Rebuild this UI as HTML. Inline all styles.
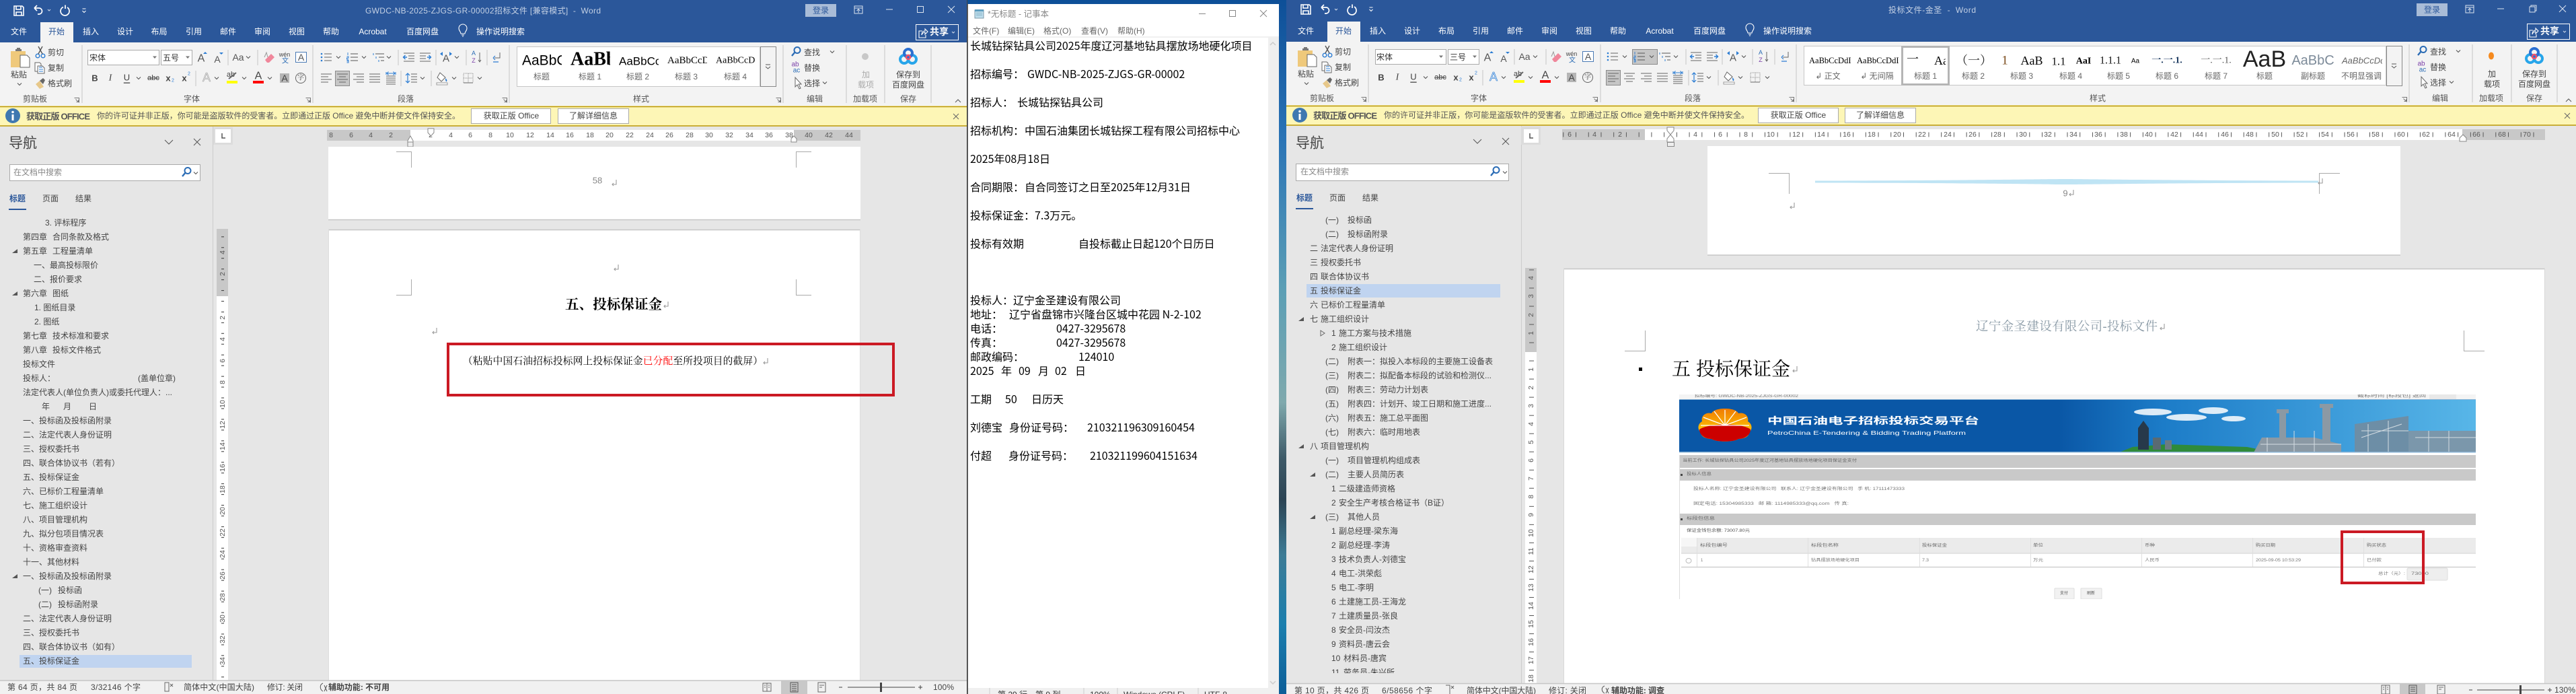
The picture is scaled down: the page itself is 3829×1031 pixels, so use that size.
<!DOCTYPE html>
<html lang="zh-CN">
<head>
<meta charset="utf-8">
<title>Word 与记事本</title>
<style>
html,body{margin:0;padding:0;background:#e6e6e6;width:3829px;height:1031px;overflow:hidden}
svg{display:block}
text{font-family:"Liberation Sans","Noto Sans CJK SC",sans-serif;font-size:12px;dominant-baseline:central;fill:#444;white-space:pre}
.w{fill:#fff}.c{text-anchor:middle}.tb{fill:#c3d0e4}
.g{fill:#666}.lb{fill:#555}
.s{font-family:"Liberation Serif","Noto Serif CJK SC",serif}
.np{font-family:"Noto Sans CJK SC","Liberation Sans",sans-serif;font-size:16px;fill:#000}
.r{font-size:10.5px;fill:#555;text-anchor:middle}
.sm{font-size:6px;fill:#777}
.nv{fill:#444}
use{overflow:visible}
</style>
</head>
<body>
<svg xmlns="http://www.w3.org/2000/svg" width="3829" height="1031" viewBox="0 0 3829 1031">
<defs>
<linearGradient id="wall" x1="0" y1="0" x2="0" y2="1">
<stop offset="0" stop-color="#0d4f98"/><stop offset=".2" stop-color="#2a74b6"/><stop offset=".42" stop-color="#5c9fb5"/><stop offset=".58" stop-color="#7fa9ad"/><stop offset=".66" stop-color="#3e5a68"/><stop offset=".72" stop-color="#2c4454"/><stop offset=".8" stop-color="#3d7c96"/><stop offset=".9" stop-color="#1b7fae"/><stop offset="1" stop-color="#0d5e98"/>
</linearGradient>
<linearGradient id="sky" x1="0" y1="0" x2="1" y2="0">
<stop offset="0" stop-color="#0a57a6"/><stop offset=".25" stop-color="#1c7cc8"/><stop offset="1" stop-color="#58b6e8"/>
</linearGradient>
<linearGradient id="pet" x1="0" y1="0" x2="0" y2="1">
<stop offset="0" stop-color="#ef7a00"/><stop offset=".75" stop-color="#ffcb05"/>
</linearGradient>
<pattern id="tk2" patternUnits="userSpaceOnUse" x="2454.4" y="192" width="18.73" height="16"><path d="M.5 4.5V11.5" stroke="#555" fill="none"/></pattern>
<pattern id="tv1" patternUnits="userSpaceOnUse" x="328" y="431" width="10" height="15.95"><path d="M1 .5H5" stroke="#444" stroke-width="1.2"/></pattern>
<pattern id="tv2" patternUnits="userSpaceOnUse" x="2273" y="454.5" width="10" height="27.03"><path d="M0 .5H7" stroke="#555"/></pattern>
<g id="save" fill="none" stroke="#fff" stroke-width="1.6"><path d="M-7-7H5L7-5V7H-7Z"/><path d="M-4-7V-2H3V-7M-4 7V2H4V7"/></g>
<g id="undo" fill="none" stroke="#fff" stroke-width="1.7"><path d="M-6-3L-2-7M-6-3L-2 1M-6-3H1A4.5 4.5 0 0 1 1 6H-1"/></g>
<g id="redo" fill="none" stroke="#fff" stroke-width="1.7"><path d="M-2-5.5A6.5 6.5 0 1 0 4-5M1-8.5V-3"/></g>
<g id="drop" fill="none" stroke="#fff" stroke-width="1.1"><path d="M-2.5-3H2.5M-2.5 0L0 2.5L2.5 0"/></g>
<path id="chw" d="M-2-1L0 1L2-1" stroke="#d5deec" fill="none"/>
<path id="ch" d="M-3-1.5L0 1.5L3-1.5" stroke="#555" fill="none" stroke-width="1.1"/>
<path id="tri" d="M5-3V3H-3Z" fill="#555"/>
<path id="ctri" d="M-3-4L3 0L-3 4Z" fill="none" stroke="#666"/>
<path id="ret" d="M3-5V2H-3M-1 0L-3 2L-1 4" fill="none" stroke="#9a9a9a" stroke-width="1.1"/>
<path id="lau" d="M-3.5-3.5H3.5V3.5M-1.5-1.5L2.5 2.5M2.5-.5V2.5H-.5" fill="none" stroke="#777"/>
<g id="bulb" fill="none" stroke="#fff" stroke-width="1.1"><path d="M-3 4C-3 1-6 0-6-4A6 6 0 0 1 6-4C6 0 3 1 3 4ZM-2 6H2M-1 8H1"/></g>
<g id="share" fill="none" stroke="#fff" stroke-width="1.1"><path d="M-1-3H-6V7H4V3M-2 3C-2-1 0-3 3-3V-6L7-2L3 2V-1C1-1-1 0-2 3Z"/></g>
<g id="paste"><rect x="0" y="5" width="22" height="24" fill="#efc97b"/><path d="M7 5V2H9V0H14V2H16V5Z" fill="#777"/><path d="M14 11H24L28 15V29H14Z" fill="#fff" stroke="#666"/></g>
<g id="cut" fill="none" stroke-width="1.4"><circle cx="-4" cy="6" r="2.8" stroke="#2b7cd3"/><circle cx="4" cy="6" r="2.8" stroke="#2b7cd3"/><path d="M-3 3L3-8M3 3L-3-8" stroke="#555"/></g>
<g id="copy" fill="#fff" stroke="#666"><path d="M-7-8H0L2-6V5H-7Z"/><path d="M-3-3H4L7 0V8H-3Z"/><path d="M-1-1H4M-1 2H5M-1 5H5" stroke="#2b7cd3"/></g>
<g id="brush"><path d="M-7 1L-1-4L5 5L-1 8Z" fill="#e7c88a"/><path d="M-1-4L4-8L7-5L4 1Z" fill="#666"/></g>
<g id="eraser"><path d="M-6 3L3-6L8-1L0 7H-3Z" fill="#f0879b"/><path d="M-7-1L-4-8L-2-1" fill="none" stroke="#999"/></g>
<g id="bul"><g fill="#2b7cd3"><circle cx="-7" cy="-5" r="1.3"/><circle cx="-7" cy="0" r="1.3"/><circle cx="-7" cy="5" r="1.3"/></g><path d="M-3-5H8M-3 0H8M-3 5H8" stroke="#666"/></g>
<g id="num"><path d="M-7-7V-3M-8.5 -1H-6V1H-8.5V3H-6M-8.5 4.5H-6V8H-8.5M-8.5 6H-6" stroke="#2b7cd3" fill="none" stroke-width=".9"/><path d="M-3-5H8M-3 0H8M-3 5H8" stroke="#555"/></g>
<g id="mul"><path d="M-8-6V-3M-4-1V2M0 4V7" stroke="#2b7cd3" fill="none"/><path d="M-5-5H8M0 0H8M3 5H8" stroke="#555" stroke-dasharray="6 0"/></g>
<g id="out"><path d="M-8-6H8M-1-2H8M-1 2H8M-8 6H8" stroke="#666"/><path d="M-3 0H-8M-5.5-3L-8.5 0L-5.5 3" stroke="#2b7cd3" fill="none" stroke-width="1.4"/></g>
<g id="ind"><path d="M-8-6H8M-8-2H1M-8 2H1M-8 6H8" stroke="#666"/><path d="M3 0H8M5.5-3L8.5 0L5.5 3" stroke="#2b7cd3" fill="none" stroke-width="1.4"/></g>
<g id="pm"><path d="M5-7V1H-3" fill="none" stroke="#666"/><path d="M-5 1L-2-2M-5 1L-2 4M-5 7H3" fill="none" stroke="#2b7cd3" stroke-width="1.2"/></g>
<path id="al" d="M-8-6H8M-8-2H3M-8 2H8M-8 6H3" stroke="#666"/>
<path id="ac" d="M-8-6H8M-5-2H5M-8 2H8M-5 6H5" stroke="#666"/>
<path id="ar" d="M-8-6H8M-3-2H8M-8 2H8M-3 6H8" stroke="#666"/>
<path id="aj" d="M-8-6H8M-8-2H8M-8 2H8M-8 6H8" stroke="#666"/>
<g id="ad"><path d="M-7-3H7M-7 0H7M-7 3H7M-7 6H7M-7 9H7" stroke="#666"/><path d="M-7-9V-5M7-9V-5M-6-7H6M-3.5-9.5L-6-7L-3.5-4.5M3.5-9.5L6-7L3.5-4.5" stroke="#2b7cd3" fill="none"/></g>
<g id="ls"><path d="M-6-7V7M-9-4L-6-7L-3-4M-9 4L-6 7L-3 4" stroke="#2b7cd3" fill="none" stroke-width="1.2"/><path d="M-1-6H8M-1-2H8M-1 2H8M-1 6H8" stroke="#666"/></g>
<g id="sh"><path d="M-3-8L5-1L-1 5L-7-1Z" fill="#fff" stroke="#666"/><path d="M5 0C7 2 8 3 7 5C6 6 5 4 5 0Z" fill="#2b7cd3"/><rect x="-8" y="7" width="16" height="3" fill="#fff" stroke="#999"/></g>
<g id="bd"><rect x="-7" y="-7" width="14" height="14" fill="none" stroke="#888" stroke-dasharray="1 1"/><path d="M0-7V7M-7 0H7" stroke="#888" stroke-dasharray="1 1"/><path d="M-7 7H7" stroke="#666"/></g>
<g id="find" fill="none"><circle cx="2" cy="-2.5" r="4.5" stroke="#2b6cb5" stroke-width="2"/><path d="M-1-0L-6 6" stroke="#2b6cb5" stroke-width="2.4"/></g>
<path id="sel" d="M-3-8V6L0 3L3 9L5 8L2 2H6Z" fill="#fff" stroke="#666"/>
<g id="baidu" fill="none" stroke-width="4"><circle cx="-6" cy="3" r="6" stroke="#27a5ea"/><circle cx="6" cy="3" r="6" stroke="#27a5ea"/><circle cx="0" cy="-6" r="6" stroke="#2a6fd1"/><circle cx="0" cy="0" r="3" stroke="#f2516a" stroke-width="2.4"/></g>
<g id="np"><path d="M1 3H14V15H1Z" fill="#bfe0ee" stroke="#7d98a8"/><path d="M1 2H14V5H1Z" fill="#5f9fc0"/><path d="M3 7H12M3 9H12M3 11H12" stroke="#8fb6c9"/></g>
<clipPath id="g0"><rect x="770" y="70" width="65" height="40"/></clipPath>
<clipPath id="g1"><rect x="842" y="70" width="65" height="40"/></clipPath>
<clipPath id="g2"><rect x="914" y="70" width="65" height="40"/></clipPath>
<clipPath id="g3"><rect x="986" y="70" width="65" height="40"/></clipPath>
<clipPath id="g4"><rect x="1058" y="70" width="64" height="40"/></clipPath>
<clipPath id="g5"><rect x="2830" y="70" width="62" height="40"/></clipPath>
<clipPath id="g6"><rect x="3475" y="70" width="66" height="40"/></clipPath>
<clipPath id="navl"><rect x="1912" y="316" width="348" height="684"/></clipPath>
<clipPath id="imgc"><rect x="2496" y="586" width="1184" height="304"/></clipPath>
<clipPath id="ntp"><rect x="1438" y="1022" width="463" height="9"/></clipPath>
</defs>

<!-- wallpaper -->
<rect x="1430" y="0" width="490" height="1031" fill="url(#wall)"/>

<!-- ================= LEFT WORD ================= -->
<rect x="0" y="0" width="1438" height="1031" fill="#e6e6e6"/>
<rect x="0" y="0" width="1438" height="63" fill="#2b579a"/>
<use href="#save" x="28" y="16"/><use href="#undo" x="57" y="15"/><use href="#chw" x="73" y="15"/><use href="#redo" x="96" y="16"/><use href="#drop" x="125" y="16"/>
<text x="543" y="16" class="tb" textLength="350" lengthAdjust="spacing">GWDC-NB-2025-ZJGS-GR-00002招标文件 [兼容模式]  -  Word</text>
<rect x="1197" y="6" width="46" height="19" fill="#a9bcd7"/><text x="1220" y="15.500" class="c" style="fill:#2b579a">登录</text>
<path d="M1270 9H1282V20H1270ZM1270 12H1282M1276 19V14M1273.500 16L1276 13.500L1278.500 16" fill="none" stroke="#dbe3ef"/>
<path d="M1317 14H1327" stroke="#dbe3ef"/><rect x="1363.500" y="9.500" width="9" height="9" fill="none" stroke="#dbe3ef"/><path d="M1409 9L1419 19M1419 9L1409 19" stroke="#dbe3ef"/>
<rect x="60" y="33" width="49" height="30" fill="#f3f3f3"/>
<g class="tabs">
<text x="28" y="47" class="w c">文件</text><text x="84" y="47" class="c" style="fill:#2b579a">开始</text><text x="135" y="47" class="w c">插入</text><text x="186" y="47" class="w c">设计</text><text x="236.500" y="47" class="w c">布局</text><text x="288" y="47" class="w c">引用</text><text x="339" y="47" class="w c">邮件</text><text x="390" y="47" class="w c">审阅</text><text x="441" y="47" class="w c">视图</text><text x="492" y="47" class="w c">帮助</text><text x="554" y="47" class="w c">Acrobat</text><text x="628" y="47" class="w c">百度网盘</text><use href="#bulb" x="688" y="46"/><text x="708" y="47" class="w">操作说明搜索</text>
</g>
<rect x="1361.500" y="36.500" width="63" height="23" fill="none" stroke="#fff"/><use href="#share" x="1372" y="49"/><text x="1382" y="47" class="w" style="font-weight:bold;font-size:14px">共享</text><use href="#chw" x="1417" y="48"/>
<!-- ribbon -->
<rect x="0" y="63" width="1438" height="95" fill="#f3f3f3"/>
<path d="M122 67V153M465 67V153M757 67V153M1164 67V153M1258 67V153M1315 67V153M1384 67V153" stroke="#c6c6c6"/>
<use href="#paste" x="16" y="71"/><text x="28" y="111" class="c">粘贴</text><use href="#ch" x="29" y="125"/>
<use href="#cut" x="60" y="77"/><text x="71" y="78">剪切</text><use href="#copy" x="59" y="101"/><text x="71" y="101">复制</text><use href="#brush" x="60" y="124"/><text x="71" y="124">格式刷</text>
<text x="52" y="147" class="c lb">剪贴板</text><use href="#lau" x="114" y="149"/>
<rect x="130.500" y="74.500" width="106" height="22" fill="#fff" stroke="#aaa"/><text x="133" y="86" style="fill:#333">宋体</text><path d="M227 83.500H233L230 87Z" fill="#777"/>
<rect x="239.500" y="74.500" width="46" height="22" fill="#fff" stroke="#aaa"/><text x="242" y="86" style="fill:#333">五号</text><path d="M276 83.500H282L279 87Z" fill="#777"/>
<text x="299" y="87" class="c" style="font-size:16px;fill:#555">A</text><path d="M302 80H308L305 77Z" fill="#2b7cd3"/>
<text x="323" y="88" class="c" style="font-size:14px;fill:#555">A</text><path d="M326 78H332L329 81Z" fill="#2b7cd3"/>
<path d="M339 74V97M383 74V97M291 105V128M592 74V97M648 74V97M693 74V97M724 74V97M596 105V128M641 105V128" stroke="#c6c6c6"/>
<text x="354" y="85" class="c" style="font-size:14px;fill:#555">Aa</text><use href="#ch" x="369" y="85"/>
<use href="#eraser" x="400" y="86"/><text x="423" y="81" class="c" style="font-size:9px">wén</text><text x="424" y="91" class="c" style="font-size:10px;fill:#2b6cb5">文</text>
<rect x="439.500" y="77.500" width="16" height="15" fill="#fff" stroke="#4a7ab5"/><text x="447.500" y="85" class="c" style="font-size:14px;fill:#555">A</text>
<text x="141" y="116" class="c" style="font-size:13px;font-weight:bold">B</text><text x="164" y="116" class="c s" style="font-size:14px;font-style:italic">I</text><text x="188.500" y="115" class="c" style="font-size:13px;text-decoration:underline">U</text><use href="#ch" x="206" y="116"/>
<text x="228" y="116" class="c" style="font-size:11px;text-decoration:line-through">abc</text><text x="250" y="116" class="c" style="font-size:13px;font-weight:bold">x</text><text x="257" y="120" class="c" style="font-size:7px;fill:#2b7cd3">2</text><text x="274" y="116" class="c" style="font-size:13px;font-weight:bold">x</text><text x="281" y="110" class="c" style="font-size:7px;fill:#2b7cd3">2</text>
<text x="307" y="115" class="c" style="font-size:18px;fill:#ddd;stroke:#aaa;stroke-width:.6">A</text><use href="#ch" x="322" y="116"/>
<text x="343" y="111" class="c" style="font-size:11px">ab</text><path d="M340 117L351 108" stroke="#666" stroke-width="2"/><rect x="337" y="120" width="16" height="4" fill="#ffff00"/><use href="#ch" x="363" y="116"/>
<text x="384" y="113" class="c" style="font-size:16px">A</text><rect x="376" y="120" width="16" height="4" fill="#f00"/><use href="#ch" x="401" y="116"/>
<rect x="416" y="109" width="14" height="14" fill="#b5b5b5"/><text x="423" y="116" class="c" style="font-size:14px">A</text>
<circle cx="447" cy="116" r="7.500" fill="none" stroke="#666"/><text x="447" y="116" class="c s" style="font-size:10px">字</text>
<text x="285" y="147" class="c lb">字体</text><use href="#lau" x="458" y="149"/>
<use href="#bul" x="485" y="85"/><use href="#ch" x="503" y="85"/><use href="#num" x="524" y="85"/><use href="#ch" x="541" y="85"/><use href="#mul" x="563" y="85"/><use href="#ch" x="578" y="85"/><use href="#out" x="608" y="85"/><use href="#ind" x="632" y="85"/>
<text x="663" y="87" class="c" style="font-size:15px;fill:#555">A</text><path d="M654 80L658 77V83ZM672 80L668 77V83Z" fill="#2b7cd3"/><use href="#ch" x="679" y="85"/>
<text x="704" y="79" class="c" style="font-size:9px;fill:#2b6cb5">A</text><text x="704" y="90" class="c" style="font-size:9px;fill:#7a3fa8">Z</text><path d="M713 78V92M711 89L713 92L715 89" fill="none" stroke="#666"/><use href="#pm" x="738" y="85"/>
<use href="#al" x="485" y="116"/><rect x="498.500" y="105.500" width="21" height="22" fill="#c6c6c6" stroke="#8a8a8a"/><use href="#ac" x="509" y="116"/><use href="#ar" x="533" y="116"/><use href="#aj" x="557" y="116"/><use href="#ad" x="581" y="116"/>
<use href="#ls" x="612" y="116"/><use href="#ch" x="628" y="116"/><use href="#sh" x="657" y="116"/><use href="#ch" x="675" y="116"/><use href="#bd" x="696" y="116"/><use href="#ch" x="713" y="116"/>
<text x="603" y="147" class="c lb">段落</text><use href="#lau" x="750" y="149"/>
<!-- gallery -->
<rect x="768.500" y="69.500" width="361" height="59" fill="#fff" stroke="#c6c6c6"/><rect x="1130.500" y="69.500" width="23" height="59" fill="#f3f3f3" stroke="#888"/><path d="M1138 96H1145M1138 99L1141.500 102L1145 99" fill="none" stroke="#555"/>
<g clip-path="url(#g0)"><text x="776" y="90" style="font-size:21px;fill:#000">AaBbCcDdEe</text></g>
<g clip-path="url(#g1)"><text x="848" y="88" class="s" style="font-size:28px;font-weight:bold;fill:#000">AaBbCc</text></g>
<g clip-path="url(#g2)"><text x="920" y="91" style="font-size:17px;fill:#000">AaBbCcDd</text></g>
<g clip-path="url(#g3)"><text x="992" y="90" class="s" style="font-size:15px;fill:#000">AaBbCcDd</text></g>
<g clip-path="url(#g4)"><text x="1064" y="90" class="s" style="font-size:14px;fill:#000">AaBbCcDdEe</text></g>
<text x="805" y="114" class="c g">标题</text><text x="877" y="114" class="c g">标题 1</text><text x="948" y="114" class="c g">标题 2</text><text x="1020" y="114" class="c g">标题 3</text><text x="1093" y="114" class="c g">标题 4</text>
<text x="953" y="147" class="c lb">样式</text><use href="#lau" x="1157" y="149"/>
<use href="#find" x="1183" y="77"/><text x="1195" y="78">查找</text><use href="#ch" x="1237" y="77"/>
<text x="1182" y="96" class="c" style="font-size:10px;fill:#7a3fa8">ab</text><text x="1184" y="105" class="c" style="font-size:10px;fill:#2b6cb5">ac</text><text x="1195" y="101">替换</text>
<use href="#sel" x="1185" y="123"/><text x="1195" y="124">选择</text><use href="#ch" x="1226" y="123"/>
<text x="1211" y="147" class="c lb">编辑</text>
<circle cx="1286" cy="84" r="5" fill="#c8c8c8"/><text x="1287" y="111" class="c" style="fill:#aaa">加</text><text x="1287" y="126" class="c" style="fill:#aaa">载项</text><text x="1286" y="147" class="c lb">加载项</text>
<use href="#baidu" x="1350" y="85"/><text x="1350" y="111" class="c">保存到</text><text x="1350" y="126" class="c">百度网盘</text><text x="1350" y="147" class="c lb">保存</text>
<path d="M1420 152L1424 148L1428 152" fill="none" stroke="#555"/>
<!-- yellow bar -->
<rect x="0" y="157" width="1438" height="31" fill="#fdf6b6"/><path d="M0 158.500H1438M0 187H1438" stroke="#b8960f" stroke-width="1.400"/>
<circle cx="19" cy="172" r="11" fill="#3f78b0"/><rect x="17.500" y="170" width="3" height="9" fill="#fff"/><circle cx="19" cy="166.500" r="1.800" fill="#fff"/>
<text x="39" y="173" style="font-weight:bold;font-size:13px;fill:#555" textLength="95">获取正版 OFFICE</text>
<text x="144" y="172" style="fill:#555" textLength="540">你的许可证并非正版，你可能是盗版软件的受害者。立即通过正版 Office 避免中断并使文件保持安全。</text>
<rect x="700.500" y="161.500" width="118" height="22" fill="#fff" stroke="#aaa"/><text x="760" y="172" class="c">获取正版 Office</text>
<rect x="829.500" y="161.500" width="105" height="22" fill="#fff" stroke="#aaa"/><text x="882" y="172" class="c">了解详细信息</text>
<path d="M1417 169L1425 177M1425 169L1417 177" stroke="#666"/>
<!-- nav -->
<path d="M316.500 188V1011" stroke="#ccc"/>
<text x="13" y="213" style="font-size:21px">导航</text><path d="M245 208L251 214L257 208M288 206L298 216M298 206L288 216" fill="none" stroke="#555"/>
<rect x="14.500" y="244.500" width="283" height="24" fill="#fff" stroke="#aaa"/><text x="20" y="256" style="fill:#888">在文档中搜索</text><use href="#find" x="277" y="256"/><use href="#ch" x="291" y="257"/>
<text x="14" y="295" style="font-weight:bold;fill:#2b579a">标题</text><text x="63" y="295">页面</text><text x="112" y="295">结果</text><rect x="13" y="310" width="26" height="2" fill="#2b579a"/>
<rect x="29" y="973" width="256" height="19" fill="#c0d4f0"/>
<g class="nv">
<text x="67" y="331">3. 评标程序</text>
<text x="34" y="352">第四章<tspan x="78">合同条款及格式</tspan></text>
<use href="#tri" x="21" y="373"/><text x="34" y="373">第五章<tspan x="78">工程量清单</tspan></text>
<text x="50" y="394">一、<tspan x="74">最高投标限价</tspan></text>
<text x="50" y="415">二、<tspan x="74">报价要求</tspan></text>
<use href="#tri" x="21" y="436"/><text x="34" y="436">第六章<tspan x="78">图纸</tspan></text>
<text x="51" y="457">1. 图纸目录</text>
<text x="51" y="478">2. 图纸</text>
<text x="34" y="499">第七章<tspan x="78">技术标准和要求</tspan></text>
<text x="34" y="520">第八章<tspan x="78">投标文件格式</tspan></text>
<text x="34" y="541">投标文件</text>
<text x="34" y="562">投标人：<tspan x="205">(盖单位章)</tspan></text>
<text x="34" y="583">法定代表人(单位负责人)或委托代理人：...</text>
<text x="62" y="604">年<tspan x="94">月</tspan><tspan x="132">日</tspan></text>
<text x="34" y="625">一、<tspan x="58">投标函及投标函附录</tspan></text>
<text x="34" y="646">二、<tspan x="58">法定代表人身份证明</tspan></text>
<text x="34" y="667">三、<tspan x="58">授权委托书</tspan></text>
<text x="34" y="688">四、<tspan x="58">联合体协议书（若有）</tspan></text>
<text x="34" y="709">五、<tspan x="58">投标保证金</tspan></text>
<text x="34" y="730">六、<tspan x="58">已标价工程量清单</tspan></text>
<text x="34" y="751">七、<tspan x="58">施工组织设计</tspan></text>
<text x="34" y="772">八、<tspan x="58">项目管理机构</tspan></text>
<text x="34" y="793">九、<tspan x="58">拟分包项目情况表</tspan></text>
<text x="34" y="814">十、<tspan x="58">资格审查资料</tspan></text>
<text x="34" y="835">十一、<tspan x="70">其他材料</tspan></text>
<use href="#tri" x="21" y="856"/><text x="34" y="856">一、<tspan x="58">投标函及投标函附录</tspan></text>
<text x="57" y="877">(一)<tspan x="86">投标函</tspan></text>
<text x="57" y="898">(二)<tspan x="86">投标函附录</tspan></text>
<text x="34" y="919">二、<tspan x="58">法定代表人身份证明</tspan></text>
<text x="34" y="940">三、<tspan x="58">授权委托书</tspan></text>
<text x="34" y="961">四、<tspan x="58">联合体协议书（如有）</tspan></text>
<text x="34" y="982">五、<tspan x="58">投标保证金</tspan></text>
</g>
<!-- doc left -->
<rect x="317" y="189" width="29" height="26" fill="#dcdcdc"/><rect x="320" y="192" width="23" height="20" fill="#fff"/><path d="M330 198V205H335" fill="none" stroke="#555" stroke-width="1.500"/>
<rect x="486" y="193" width="793" height="16" fill="#c8c8c8"/><rect x="610" y="193" width="570" height="16" fill="#fff"/>
<g>
<text x="492" y="201" class="r">8</text><text x="522" y="201" class="r">6</text><text x="551" y="201" class="r">4</text><text x="581" y="201" class="r">2</text><text x="640" y="201" class="r">2</text><text x="670" y="201" class="r">4</text><text x="699" y="201" class="r">6</text><text x="729" y="201" class="r">8</text><text x="758" y="201" class="r">10</text><text x="788" y="201" class="r">12</text><text x="818" y="201" class="r">14</text><text x="847" y="201" class="r">16</text><text x="877" y="201" class="r">18</text><text x="906" y="201" class="r">20</text><text x="936" y="201" class="r">22</text><text x="966" y="201" class="r">24</text><text x="995" y="201" class="r">26</text><text x="1025" y="201" class="r">28</text><text x="1054" y="201" class="r">30</text><text x="1084" y="201" class="r">32</text><text x="1114" y="201" class="r">34</text><text x="1143" y="201" class="r">36</text><text x="1173" y="201" class="r">38</text><text x="1202" y="201" class="r">40</text><text x="1232" y="201" class="r">42</text><text x="1262" y="201" class="r">44</text>
</g>
<path d="M636 191H645V197L640.500 202L636 197Z" fill="#fff" stroke="#888"/><path d="M606 209L610 202L614 209V217H606ZM606 211H614" fill="#fff" stroke="#888"/>
<path d="M606 211H614V218H606Z" fill="#eee" stroke="#888"/><path d="M1176 211V206L1180 202L1184 206V211Z" fill="#fff" stroke="#888"/>
<!-- v ruler left -->
<rect x="322" y="340" width="17" height="671" fill="#fff"/><rect x="322" y="340" width="17" height="100" fill="#c8c8c8"/>
<rect x="328" y="340" width="10" height="671" fill="url(#tv1)"/>
<g transform="rotate(-90)">
<text x="-375" y="331" class="r">4</text><text x="-407" y="331" class="r">2</text><text x="-472" y="331" class="r">2</text><text x="-504" y="331" class="r">4</text><text x="-536" y="331" class="r">6</text><text x="-568" y="331" class="r">8</text><text x="-600" y="331" class="r">10</text><text x="-631" y="331" class="r">12</text><text x="-663" y="331" class="r">14</text><text x="-695" y="331" class="r">16</text><text x="-727" y="331" class="r">18</text><text x="-759" y="331" class="r">20</text><text x="-791" y="331" class="r">22</text><text x="-823" y="331" class="r">24</text><text x="-855" y="331" class="r">26</text><text x="-887" y="331" class="r">28</text><text x="-919" y="331" class="r">30</text><text x="-950" y="331" class="r">32</text><text x="-982" y="331" class="r">34</text>
</g>
<rect x="488" y="218" width="791" height="108" fill="#fff"/><path d="M488 326.500H1279" stroke="#c6c6c6" stroke-width="1.500"/>
<path d="M589 225.500H611.500V249M1206 225.500H1183.500V249" fill="none" stroke="#aaa"/>
<text x="888" y="268" class="c" style="fill:#888;font-size:13px">58</text><use href="#ret" x="913" y="272"/>
<rect x="488" y="341" width="791" height="670" fill="#fff"/><path d="M488 341.500H1279" stroke="#c6c6c6" stroke-width="1.500"/><path d="M488.500 341V1011M1278.500 341V1011" stroke="#ddd"/>
<use href="#ret" x="916" y="398"/><path d="M611.500 415V438.500H589M1183.500 415V438.500H1206" fill="none" stroke="#aaa"/>
<text x="840" y="453" class="s" style="font-size:20.600px;font-weight:bold;fill:#000">五、投标保证金</text><use href="#ret" x="990" y="453"/>
<use href="#ret" x="646" y="492"/>
<text x="688" y="537" class="s" style="font-size:14.700px;fill:#000" textLength="446">（粘贴中国石油招标投标网上投标保证金<tspan style="fill:#f00">已分配</tspan>至所投项目的截屏）</text><use href="#ret" x="1138" y="537"/>
<rect x="666" y="511" width="662" height="76" fill="none" stroke="#cb1a24" stroke-width="4"/>
<!-- status left -->
<rect x="0" y="1011" width="1438" height="20" fill="#f1f1f1"/><path d="M0 1011H1438" stroke="#c6c6c6" stroke-width="1.500"/>
<text x="11" y="1021" textLength="104">第 64 页，共 84 页</text><text x="135" y="1021" textLength="74">3/32146 个字</text>
<path d="M245 1014H251V1027H245ZM253 1016L257 1020M257 1016L253 1020" fill="none" stroke="#666"/>
<text x="273" y="1021" textLength="105">简体中文(中国大陆)</text><text x="397" y="1021" textLength="53">修订: 关闭</text>
<path d="M480 1015C475 1017 475 1024 480 1027M482 1018L486 1027M486 1018L482 1027" fill="none" stroke="#555"/>
<text x="488" y="1021" textLength="91" style="font-weight:bold">辅助功能: 不可用</text>
<path d="M1134 1015H1146V1027H1134ZM1140 1015V1027M1136 1018H1138M1136 1021H1138M1142 1018H1144M1142 1021H1144" fill="none" stroke="#666"/>
<rect x="1161" y="1011" width="39" height="20" fill="#c8c8c8"/><path d="M1175 1014H1186V1028H1175ZM1177 1017H1184M1177 1020H1184M1177 1023H1184M1177 1026H1184" fill="none" stroke="#555"/>
<path d="M1216 1014H1227V1028H1216ZM1218 1018H1225M1218 1021H1222" fill="none" stroke="#666"/>
<path d="M1247 1021H1252M1260 1021H1360M1365 1021H1371M1368 1018V1024" stroke="#444"/><rect x="1308" y="1014" width="3" height="14" fill="#444"/>
<text x="1387" y="1021" textLength="31">100%</text>
<path d="M1437.500 0V1031" stroke="#444"/>

<!-- ================= NOTEPAD ================= -->
<rect x="1438" y="6" width="463" height="1025" fill="#fff"/>
<path d="M1438.500 6V1031" stroke="#666"/>
<use href="#np" x="1448" y="12"/>
<text x="1468" y="21" style="fill:#888;font-size:12.500px">*无标题 - 记事本</text>
<path d="M1782 20.500H1792" stroke="#888"/><rect x="1827.500" y="15.500" width="9" height="9" fill="none" stroke="#888"/><path d="M1873 15L1883 25M1883 15L1873 25" stroke="#888"/>
<text x="1446" y="46" style="fill:#666">文件(F)</text><text x="1498" y="46" style="fill:#666">编辑(E)</text><text x="1551" y="46" style="fill:#666">格式(O)</text><text x="1607" y="46" style="fill:#666">查看(V)</text><text x="1661" y="46" style="fill:#666">帮助(H)</text>
<rect x="1439" y="54" width="462" height="2" fill="#f0f0f0"/>
<rect x="1885" y="56" width="16" height="975" fill="#efefef"/><path d="M1888 67L1892 63L1896 67M1888 1012L1892 1016L1896 1012" fill="none" stroke="#ccc" stroke-width="1.500"/>
<text x="1442" y="67" class="np">长城钻探钻具公司2025年度辽河基地钻具摆放场地硬化项目</text>
<text x="1442" y="109" class="np">招标编号：<tspan x="1527">GWDC-NB-2025-ZJGS-GR-00002</tspan></text>
<text x="1442" y="151" class="np">招标人：<tspan x="1512">长城钻探钻具公司</tspan></text>
<text x="1442" y="193" class="np">招标机构：<tspan x="1523">中国石油集团长城钻探工程有限公司招标中心</tspan></text>
<text x="1442" y="235" class="np">2025年08月18日</text>
<text x="1442" y="277" class="np">合同期限：<tspan x="1523">自合同签订之日至2025年12月31日</tspan></text>
<text x="1442" y="319" class="np">投标保证金：<tspan x="1538">7.3万元。</tspan></text>
<text x="1442" y="361" class="np">投标有效期<tspan x="1603">自投标截止日起120个日历日</tspan></text>
<text x="1442" y="445" class="np">投标人：<tspan x="1506">辽宁金圣建设有限公司</tspan></text>
<text x="1442" y="466" class="np">地址：<tspan x="1500">辽宁省盘锦市兴隆台区城中花园 N-2-102</tspan></text>
<text x="1442" y="487" class="np">电话：<tspan x="1570">0427-3295678</tspan></text>
<text x="1442" y="508" class="np">传真：<tspan x="1570">0427-3295678</tspan></text>
<text x="1442" y="529" class="np">邮政编码：<tspan x="1603">124010</tspan></text>
<text x="1442" y="550" class="np">2025<tspan x="1488">年</tspan><tspan x="1514">09</tspan><tspan x="1543">月</tspan><tspan x="1568">02</tspan><tspan x="1598">日</tspan></text>
<text x="1442" y="592" class="np">工期<tspan x="1494">50</tspan><tspan x="1533">日历天</tspan></text>
<text x="1442" y="634" class="np">刘德宝<tspan x="1500">身份证号码：</tspan><tspan x="1616">210321196309160454</tspan></text>
<text x="1442" y="676" class="np">付超<tspan x="1499">身份证号码：</tspan><tspan x="1620">210321199604151634</tspan></text>
<rect x="1439" y="1022" width="462" height="9" fill="#f0f0f0"/>
<path d="M1471 1022V1031M1611 1022V1031M1661 1022V1031M1781 1022V1031" stroke="#ccc"/>
<g clip-path="url(#ntp)"><text x="1483" y="1032" style="fill:#333">第 29 行，第 9 列</text><text x="1620" y="1032" style="fill:#333">100%</text><text x="1670" y="1032" style="fill:#333">Windows (CRLF)</text><text x="1790" y="1032" style="fill:#333">UTF-8</text></g>

<!-- ================= RIGHT WORD ================= -->
<rect x="1912" y="0" width="1917" height="1031" fill="#e6e6e6"/>
<rect x="1912" y="0" width="1917" height="62" fill="#2b579a"/>
<use href="#save" x="1941" y="14"/><use href="#undo" x="1970" y="14"/><use href="#chw" x="1986" y="14"/><use href="#redo" x="2009" y="15"/><use href="#drop" x="2038" y="14"/>
<text x="2807" y="15" class="tb" textLength="130" lengthAdjust="spacing">投标文件-金圣  -  Word</text>
<rect x="3592" y="5" width="46" height="19" fill="#a9bcd7"/><text x="3615" y="14.500" class="c" style="fill:#2b579a">登录</text>
<path d="M3665 8H3677V19H3665ZM3665 11H3677M3671 18V13M3668.500 15L3671 12.500L3673.500 15" fill="none" stroke="#dbe3ef"/>
<path d="M3712 13H3722" stroke="#dbe3ef"/><path d="M3760 10H3768V18H3760ZM3762 10V8H3770V16H3768" fill="none" stroke="#dbe3ef"/><path d="M3804 8L3814 18M3814 8L3804 18" stroke="#dbe3ef"/>
<rect x="1973" y="32" width="49" height="30" fill="#f3f3f3"/>
<text x="1941" y="46" class="w c">文件</text><text x="1997" y="46" class="c" style="fill:#2b579a">开始</text><text x="2048" y="46" class="w c">插入</text><text x="2099" y="46" class="w c">设计</text><text x="2150" y="46" class="w c">布局</text><text x="2201" y="46" class="w c">引用</text><text x="2252" y="46" class="w c">邮件</text><text x="2303" y="46" class="w c">审阅</text><text x="2354" y="46" class="w c">视图</text><text x="2405" y="46" class="w c">帮助</text><text x="2467" y="46" class="w c">Acrobat</text><text x="2541" y="46" class="w c">百度网盘</text><use href="#bulb" x="2601" y="45"/><text x="2621" y="46" class="w">操作说明搜索</text>
<rect x="3756.500" y="35.500" width="63" height="23" fill="none" stroke="#fff"/><use href="#share" x="3766" y="48"/><text x="3776" y="46" class="w" style="font-weight:bold;font-size:14px">共享</text><use href="#chw" x="3812" y="47"/>
<rect x="1912" y="62" width="1917" height="95" fill="#f3f3f3"/>
<path d="M2034 66V152M2379 66V152M2670 66V152M3581 66V152M3675 66V152M3733 66V152M3801 66V152" stroke="#c6c6c6"/>
<use href="#paste" x="1929" y="70"/><text x="1941" y="110" class="c">粘贴</text><use href="#ch" x="1942" y="124"/>
<use href="#cut" x="1973" y="76"/><text x="1984" y="77">剪切</text><use href="#copy" x="1972" y="100"/><text x="1984" y="100">复制</text><use href="#brush" x="1973" y="123"/><text x="1984" y="123">格式刷</text>
<text x="1965" y="146" class="c lb">剪贴板</text><use href="#lau" x="2027" y="148"/>
<rect x="2044.500" y="73.500" width="105" height="22" fill="#fff" stroke="#aaa"/><text x="2046" y="85" style="fill:#333">宋体</text><path d="M2139 82.500H2145L2142 86Z" fill="#777"/>
<rect x="2152.500" y="73.500" width="46" height="22" fill="#fff" stroke="#aaa"/><text x="2155" y="85" style="fill:#333">三号</text><path d="M2189 82.500H2195L2192 86Z" fill="#777"/>
<text x="2211" y="86" class="c" style="font-size:16px;fill:#555">A</text><path d="M2214 79H2220L2217 76Z" fill="#2b7cd3"/>
<text x="2235" y="87" class="c" style="font-size:14px;fill:#555">A</text><path d="M2238 77H2244L2241 80Z" fill="#2b7cd3"/>
<path d="M2251 73V96M2298 73V96M2204 104V127M2506 73V96M2560 73V96M2605 73V96M2638 73V96M2510 104V127M2554 104V127" stroke="#c6c6c6"/>
<text x="2266" y="84" class="c" style="font-size:14px;fill:#555">Aa</text><use href="#ch" x="2282" y="84"/>
<use href="#eraser" x="2313" y="85"/><text x="2336" y="80" class="c" style="font-size:9px">wén</text><text x="2337" y="90" class="c" style="font-size:10px;fill:#2b6cb5">文</text>
<rect x="2352.500" y="76.500" width="16" height="15" fill="#fff" stroke="#4a7ab5"/><text x="2360.500" y="84" class="c" style="font-size:14px;fill:#555">A</text>
<text x="2053" y="115" class="c" style="font-size:13px;font-weight:bold">B</text><text x="2077" y="115" class="c s" style="font-size:14px;font-style:italic">I</text><text x="2101" y="114" class="c" style="font-size:13px;text-decoration:underline">U</text><use href="#ch" x="2119" y="115"/>
<text x="2141" y="115" class="c" style="font-size:11px;text-decoration:line-through">abc</text><text x="2164" y="115" class="c" style="font-size:13px;font-weight:bold">x</text><text x="2171" y="119" class="c" style="font-size:7px;fill:#2b7cd3">2</text><text x="2187" y="115" class="c" style="font-size:13px;font-weight:bold">x</text><text x="2194" y="109" class="c" style="font-size:7px;fill:#2b7cd3">2</text>
<text x="2220" y="114" class="c" style="font-size:18px;fill:#cfe2f5;stroke:#2b7cd3;stroke-width:.6">A</text><use href="#ch" x="2235" y="115"/>
<text x="2256" y="110" class="c" style="font-size:11px">ab</text><path d="M2253 116L2264 107" stroke="#666" stroke-width="2"/><rect x="2250" y="119" width="16" height="4" fill="#ffff00"/><use href="#ch" x="2275" y="115"/>
<text x="2297" y="112" class="c" style="font-size:16px">A</text><rect x="2289" y="119" width="16" height="4" fill="#f00"/><use href="#ch" x="2314" y="115"/>
<rect x="2329" y="108" width="14" height="14" fill="#b5b5b5"/><text x="2336" y="115" class="c" style="font-size:14px">A</text>
<circle cx="2360" cy="115" r="7.500" fill="none" stroke="#666"/><text x="2360" y="115" class="c s" style="font-size:10px">字</text>
<text x="2198" y="146" class="c lb">字体</text><use href="#lau" x="2371" y="148"/>
<use href="#bul" x="2397" y="84"/><use href="#ch" x="2415" y="84"/><rect x="2426.500" y="73.500" width="37" height="22" fill="#c6c6c6" stroke="#8a8a8a"/><use href="#num" x="2437" y="84"/><use href="#ch" x="2455" y="84"/><use href="#mul" x="2475" y="84"/><use href="#ch" x="2491" y="84"/><use href="#out" x="2521" y="84"/><use href="#ind" x="2545" y="84"/>
<text x="2576" y="86" class="c" style="font-size:15px;fill:#555">A</text><path d="M2567 79L2571 76V82ZM2585 79L2581 76V82Z" fill="#2b7cd3"/><use href="#ch" x="2592" y="84"/>
<text x="2617" y="78" class="c" style="font-size:9px;fill:#2b6cb5">A</text><text x="2617" y="89" class="c" style="font-size:9px;fill:#7a3fa8">Z</text><path d="M2626 77V91M2624 88L2626 91L2628 88" fill="none" stroke="#666"/><use href="#pm" x="2653" y="84"/>
<rect x="2387.500" y="104.500" width="21" height="22" fill="#c6c6c6" stroke="#8a8a8a"/><use href="#al" x="2398" y="115"/><use href="#ac" x="2422" y="115"/><use href="#ar" x="2447" y="115"/><use href="#aj" x="2471" y="115"/><use href="#ad" x="2494" y="115"/>
<use href="#ls" x="2524" y="115"/><use href="#ch" x="2540" y="115"/><use href="#sh" x="2570" y="115"/><use href="#ch" x="2587" y="115"/><use href="#bd" x="2609" y="115"/><use href="#ch" x="2627" y="115"/>
<text x="2516" y="146" class="c lb">段落</text><use href="#lau" x="2663" y="148"/>
<!-- gallery right -->
<rect x="2681.500" y="68.500" width="865" height="58" fill="#fff" stroke="#c6c6c6"/><rect x="3547.500" y="68.500" width="23" height="59" fill="#f3f3f3" stroke="#888"/><path d="M3555 95H3562M3555 98L3558.500 101L3562 98" fill="none" stroke="#555"/>
<rect x="2827.500" y="69.500" width="69" height="56" fill="#fff" stroke="#b5b5b5" stroke-width="3"/>
<text x="2689" y="90" class="s" style="font-size:12.500px;fill:#000">AaBbCcDdI</text><text x="2760" y="90" class="s" style="font-size:12.500px;fill:#000">AaBbCcDdI</text>
<text x="2717" y="113" class="c g">↲ 正文</text><text x="2790" y="113" class="c g">↲ 无间隔</text>
<g clip-path="url(#g5)"><text x="2834" y="88" class="s" style="font-size:18px;fill:#000">一</text><text x="2875" y="90" class="s" style="font-size:18px;fill:#000">Aa</text></g>
<text x="2862" y="113" class="c g">标题 1</text>
<text x="2934" y="90" class="c s" style="font-size:18px;fill:#222">（一）</text><text x="2980" y="90" class="c s" style="font-size:19px;fill:#7a4a1a">1</text><text x="3020" y="90" class="c s" style="font-size:18px;fill:#000">AaB</text><text x="3060" y="91" class="c s" style="font-size:17px;fill:#111">1.1</text><text x="3097" y="91" class="c s" style="font-size:14px;font-weight:bold;fill:#000">AaI</text><text x="3137" y="90" class="c s" style="font-size:16px;fill:#111">1.1.1</text><text x="3174" y="91" class="c" style="font-size:10px;fill:#000">Aa</text>
<text x="3221" y="90" class="c s" style="font-size:14px;fill:#17365d;font-weight:bold">一.一.1.</text><text x="3294" y="90" class="c s" style="font-size:14px;fill:#555">一.一.1.</text>
<text x="3366" y="88" class="c" style="font-size:34px;fill:#222">AaB</text><text x="3438" y="90" class="c" style="font-size:20px;fill:#7d8b99">AaBbC</text>
<g clip-path="url(#g6)"><text x="3481" y="90" style="font-size:13px;font-style:italic;fill:#666">AaBbCcDdEe</text></g>
<text x="2933" y="113" class="c g">标题 2</text><text x="3005" y="113" class="c g">标题 3</text><text x="3078" y="113" class="c g">标题 4</text><text x="3149" y="113" class="c g">标题 5</text><text x="3221" y="113" class="c g">标题 6</text><text x="3294" y="113" class="c g">标题 7</text><text x="3366" y="113" class="c g">标题</text><text x="3438" y="113" class="c g">副标题</text><text x="3510" y="113" class="c g">不明显强调</text>
<text x="3118" y="146" class="c lb">样式</text><use href="#lau" x="3574" y="148"/>
<use href="#find" x="3600" y="76"/><text x="3612" y="77">查找</text><use href="#ch" x="3654" y="76"/>
<text x="3599" y="95" class="c" style="font-size:10px;fill:#7a3fa8">ab</text><text x="3601" y="104" class="c" style="font-size:10px;fill:#2b6cb5">ac</text><text x="3612" y="100">替换</text>
<use href="#sel" x="3602" y="122"/><text x="3612" y="123">选择</text><use href="#ch" x="3644" y="122"/>
<text x="3627" y="146" class="c lb">编辑</text>
<ellipse cx="3703" cy="83" rx="4" ry="5.500" fill="#f58a1f"/><text x="3704" y="110" class="c">加</text><text x="3704" y="125" class="c">载项</text><text x="3703" y="146" class="c lb">加载项</text>
<use href="#baidu" x="3767" y="84"/><text x="3767" y="110" class="c">保存到</text><text x="3767" y="125" class="c">百度网盘</text><text x="3767" y="146" class="c lb">保存</text>
<path d="M3814 151L3818 147L3822 151" fill="none" stroke="#555"/>
<!-- yellow right -->
<rect x="1912" y="156" width="1917" height="31" fill="#fdf6b6"/><path d="M1912 157.500H3829M1912 186H3829" stroke="#b8960f" stroke-width="1.400"/>
<circle cx="1932" cy="171" r="11" fill="#3f78b0"/><rect x="1930.500" y="169" width="3" height="9" fill="#fff"/><circle cx="1932" cy="165.500" r="1.800" fill="#fff"/>
<text x="1952" y="172" style="font-weight:bold;font-size:13px;fill:#555" textLength="95">获取正版 OFFICE</text>
<text x="2057" y="171" style="fill:#555" textLength="543">你的许可证并非正版，你可能是盗版软件的受害者。立即通过正版 Office 避免中断并使文件保持安全。</text>
<rect x="2613.500" y="160.500" width="119" height="22" fill="#fff" stroke="#aaa"/><text x="2673" y="171" class="c">获取正版 Office</text>
<rect x="2742.500" y="160.500" width="105" height="22" fill="#fff" stroke="#aaa"/><text x="2795" y="171" class="c">了解详细信息</text>
<path d="M3812 168L3820 176M3820 168L3812 176" stroke="#666"/>
<!-- nav right -->
<path d="M2261.500 187V1015" stroke="#ccc"/>
<text x="1926" y="213" style="font-size:21px">导航</text><path d="M2190 207L2196 213L2202 207M2233 205L2243 215M2243 205L2233 215" fill="none" stroke="#555"/>
<rect x="1926.500" y="243.500" width="316" height="25" fill="#fff" stroke="#aaa"/><text x="1933" y="255" style="fill:#888">在文档中搜索</text><use href="#find" x="2222" y="255"/><use href="#ch" x="2237" y="256"/>
<text x="1927" y="294" style="font-weight:bold;fill:#2b579a">标题</text><text x="1976" y="294">页面</text><text x="2025" y="294">结果</text><rect x="1926" y="309" width="26" height="2" fill="#2b579a"/>
<rect x="1942" y="422" width="288" height="20" fill="#c0d4f0"/>
<g clip-path="url(#navl)">
<text x="1970" y="327">(一)<tspan x="2003">投标函</tspan></text>
<text x="1970" y="348">(二)<tspan x="2003">投标函附录</tspan></text>
<text x="1947" y="369">二<tspan x="1963">法定代表人身份证明</tspan></text>
<text x="1947" y="390">三<tspan x="1963">授权委托书</tspan></text>
<text x="1947" y="411">四<tspan x="1963">联合体协议书</tspan></text>
<text x="1947" y="432">五<tspan x="1963">投标保证金</tspan></text>
<text x="1947" y="453">六<tspan x="1963">已标价工程量清单</tspan></text>
<use href="#tri" x="1933" y="474"/><text x="1947" y="474">七<tspan x="1963">施工组织设计</tspan></text>
<use href="#ctri" x="1966" y="495"/><text x="1979" y="495">1<tspan x="1990">施工方案与技术措施</tspan></text>
<text x="1979" y="516">2<tspan x="1990">施工组织设计</tspan></text>
<text x="1970" y="537">(二)<tspan x="2003">附表一：拟投入本标段的主要施工设备表</tspan></text>
<text x="1970" y="558">(三)<tspan x="2003">附表二：拟配备本标段的试验和检测仪...</tspan></text>
<text x="1970" y="579">(四)<tspan x="2003">附表三：劳动力计划表</tspan></text>
<text x="1970" y="600">(五)<tspan x="2003">附表四：计划开、竣工日期和施工进度...</tspan></text>
<text x="1970" y="621">(六)<tspan x="2003">附表五：施工总平面图</tspan></text>
<text x="1970" y="642">(七)<tspan x="2003">附表六：临时用地表</tspan></text>
<use href="#tri" x="1933" y="663"/><text x="1947" y="663">八<tspan x="1963">项目管理机构</tspan></text>
<text x="1970" y="684">(一)<tspan x="2003">项目管理机构组成表</tspan></text>
<use href="#tri" x="1950" y="705"/><text x="1970" y="705">(二)<tspan x="2003">主要人员简历表</tspan></text>
<text x="1979" y="726">1<tspan x="1990">二级建造师资格</tspan></text>
<text x="1979" y="747">2<tspan x="1990">安全生产考核合格证书（B证）</tspan></text>
<use href="#tri" x="1950" y="768"/><text x="1970" y="768">(三)<tspan x="2003">其他人员</tspan></text>
<text x="1979" y="789">1<tspan x="1990">副总经理-梁东海</tspan></text>
<text x="1979" y="810">2<tspan x="1990">副总经理-李涛</tspan></text>
<text x="1979" y="831">3<tspan x="1990">技术负责人-刘德宝</tspan></text>
<text x="1979" y="852">4<tspan x="1990">电工-洪荣彪</tspan></text>
<text x="1979" y="873">5<tspan x="1990">电工-李明</tspan></text>
<text x="1979" y="894">6<tspan x="1990">土建施工员-王海龙</tspan></text>
<text x="1979" y="915">7<tspan x="1990">土建质量员-张良</tspan></text>
<text x="1979" y="936">8<tspan x="1990">安全员-闫汝杰</tspan></text>
<text x="1979" y="957">9<tspan x="1990">资料员-唐云会</tspan></text>
<text x="1979" y="978">10<tspan x="1997">材料员-唐宾</tspan></text>
<text x="1979" y="999">11<tspan x="1997">劳务员-朱兴所</tspan></text>
</g>
<!-- doc right -->
<rect x="2261" y="188" width="29" height="27" fill="#dcdcdc"/><rect x="2265" y="192" width="22" height="20" fill="#fff"/><path d="M2274 198V205H2279" fill="none" stroke="#555" stroke-width="1.500"/>
<rect x="2322" y="192" width="1461" height="16" fill="#c8c8c8"/><rect x="2445" y="192" width="1215" height="16" fill="#fff"/>
<rect x="2322" y="192" width="1461" height="16" fill="url(#tk2)"/>
<g>
<text x="2333" y="200" class="r">6</text><text x="2370" y="200" class="r">4</text><text x="2408" y="200" class="r">2</text><text x="2520" y="200" class="r">4</text><text x="2557" y="200" class="r">6</text><text x="2595" y="200" class="r">8</text><text x="2632" y="200" class="r">10</text><text x="2670" y="200" class="r">12</text><text x="2707" y="200" class="r">14</text><text x="2745" y="200" class="r">16</text><text x="2782" y="200" class="r">18</text><text x="2820" y="200" class="r">20</text><text x="2857" y="200" class="r">22</text><text x="2895" y="200" class="r">24</text><text x="2932" y="200" class="r">26</text><text x="2969" y="200" class="r">28</text><text x="3007" y="200" class="r">30</text><text x="3044" y="200" class="r">32</text><text x="3082" y="200" class="r">34</text><text x="3119" y="200" class="r">36</text><text x="3157" y="200" class="r">38</text><text x="3194" y="200" class="r">40</text><text x="3232" y="200" class="r">42</text><text x="3269" y="200" class="r">44</text><text x="3307" y="200" class="r">46</text><text x="3344" y="200" class="r">48</text><text x="3382" y="200" class="r">50</text><text x="3419" y="200" class="r">52</text><text x="3456" y="200" class="r">54</text><text x="3494" y="200" class="r">56</text><text x="3531" y="200" class="r">58</text><text x="3569" y="200" class="r">60</text><text x="3606" y="200" class="r">62</text><text x="3644" y="200" class="r">64</text><text x="3681" y="200" class="r">66</text><text x="3719" y="200" class="r">68</text><text x="3756" y="200" class="r">70</text>
</g>
<path d="M2478 189H2488V194L2483 200L2478 194ZM2483 200L2478 206V211H2488V206Z" fill="#fff" stroke="#888"/><rect x="2478.500" y="211.500" width="10" height="6" fill="#eee" stroke="#888"/><path d="M3656 210V205L3661 200L3666 205V210Z" fill="#fff" stroke="#888"/>
<!-- v ruler right -->
<rect x="2267" y="398" width="17" height="617" fill="#fff"/><rect x="2267" y="398" width="17" height="125" fill="#c8c8c8"/>
<rect x="2273" y="398" width="10" height="617" fill="url(#tv2)"/>
<g transform="rotate(-90)">
<text x="-413" y="2276" class="r">4</text><text x="-440" y="2276" class="r">3</text><text x="-468" y="2276" class="r">2</text><text x="-495" y="2276" class="r">1</text><text x="-549" y="2276" class="r">1</text><text x="-576" y="2276" class="r">2</text><text x="-603" y="2276" class="r">3</text><text x="-630" y="2276" class="r">4</text><text x="-657" y="2276" class="r">5</text><text x="-684" y="2276" class="r">6</text><text x="-711" y="2276" class="r">7</text><text x="-738" y="2276" class="r">8</text><text x="-765" y="2276" class="r">9</text><text x="-792" y="2276" class="r">10</text><text x="-819" y="2276" class="r">11</text><text x="-846" y="2276" class="r">12</text><text x="-873" y="2276" class="r">13</text><text x="-900" y="2276" class="r">14</text><text x="-927" y="2276" class="r">15</text><text x="-954" y="2276" class="r">16</text><text x="-981" y="2276" class="r">17</text><text x="-1008" y="2276" class="r">18</text>
</g>
<rect x="2538" y="217" width="1030" height="162" fill="#fff"/><path d="M2538 379H3568" stroke="#c6c6c6" stroke-width="1.500"/>
<path d="M2629 257.500H2659.500V288M3478 257.500H3447.500V288" fill="none" stroke="#aaa"/>
<path d="M2698 268.500C2950 268 3040 266 3070 266C3100 266 3200 268 3446 268.500V271.500C3200 272 3100 274 3070 274C3040 274 2950 272 2698 271.500Z" fill="#bfe4f4"/>
<use href="#ret" x="3449" y="270"/><text x="3070" y="287" class="c" style="fill:#888;font-size:13px">9</text><use href="#ret" x="3079" y="287"/><use href="#ret" x="2664" y="306"/>
<rect x="2324" y="399" width="1459" height="617" fill="#fff"/><path d="M2324 399.500H3783" stroke="#c6c6c6" stroke-width="1.500"/><path d="M2324.500 399V1016M3782.500 399V1016" stroke="#d8d8d8"/>
<text x="2937" y="486" class="s" style="font-size:18.500px;fill:#8a9aa6" textLength="270">辽宁金圣建设有限公司-投标文件</text><use href="#ret" x="3214" y="486"/>
<path d="M2445.500 491V521.500H2415M3662.500 491V521.500H3693" fill="none" stroke="#aaa"/>
<rect x="2436" y="546" width="5" height="5" fill="#000"/>
<text x="2485" y="549" class="s" style="font-size:28px;fill:#000">五</text><text x="2521" y="549" class="s" style="font-size:28px;fill:#000">投标保证金</text><use href="#ret" x="2668" y="549"/>
<!-- inserted image -->
<g clip-path="url(#imgc)">
<rect x="2496" y="586" width="1184" height="304" fill="#fff"/>
<rect x="2496" y="586" width="1184" height="8" fill="#f4f4f4"/>
<text x="2519" y="589" class="sm" textLength="154" lengthAdjust="spacingAndGlyphs">招标编号: GWDC-NB-2025-ZJGS-GR-00002</text><text x="3504" y="589" class="sm" textLength="102" lengthAdjust="spacingAndGlyphs">截标时间 [标段包] 返回</text><rect x="3611" y="586" width="40" height="8" fill="#e8e8e8"/>
<rect x="2496" y="593" width="1184" height="1.500" fill="#8bb4d6"/>
<rect x="2496" y="594" width="1184" height="78" fill="#0a57a6"/>
<rect x="3060" y="594" width="620" height="78" fill="url(#sky)"/>
<g fill="#fff" opacity=".85"><ellipse cx="3200" cy="612" rx="28" ry="5"/><ellipse cx="3290" cy="610" rx="22" ry="5"/><ellipse cx="3250" cy="620" rx="30" ry="5"/><ellipse cx="3320" cy="622" rx="18" ry="4"/></g>
<path d="M3150 672L3170 664L3220 660L3340 664L3380 672Z" fill="#2f8b3a"/>
<path d="M3178 668V636L3186 625L3194 636V668Z" fill="#27394a"/><path d="M3200 668V650H3212V668Z" fill="#5a6a72"/><path d="M3218 668V654H3228V668Z" fill="#6b7b83"/>
<g fill="#8b99a4"><rect x="3388" y="612" width="10" height="60"/><rect x="3384" y="608" width="18" height="6"/><rect x="3452" y="606" width="12" height="66"/><rect x="3448" y="600" width="20" height="6"/><path d="M3350 672L3362 650H3440L3480 660V672Z"/><path d="M3500 672V630L3580 618V672Z" fill="#6d8ea6"/><path d="M3580 672V640H3680V672Z" fill="#7b97ab"/></g>
<g stroke="#d5dde3" fill="none"><path d="M3360 660H3480M3370 650V672M3410 640V672M3440 640V672M3510 640H3580M3520 630V672M3550 625V672M3510 650L3570 630M3590 650H3680M3610 640V672M3640 640V672"/></g>
<rect x="2496" y="671" width="1184" height="1.500" fill="#8bb4d6"/>
<!-- petrochina logo -->
<path d="M2564 607C2575 607 2582 610 2584 614C2593 612 2600 618 2598 626C2605 630 2605 638 2600 642C2600 650 2590 652 2584 652C2578 657 2550 657 2544 652C2538 652 2528 650 2528 642C2523 638 2523 630 2530 626C2528 618 2535 612 2544 614C2546 610 2553 607 2564 607Z" fill="url(#pet)"/>
<path d="M2526 638C2540 628 2590 628 2602 638C2602 646 2594 652 2584 652C2578 657 2550 657 2544 652C2534 652 2526 646 2526 638Z" fill="#cc0000"/>
<path d="M2564 632V609M2564 632L2548 611M2564 632L2580 611M2564 632L2532 620M2564 632L2596 620M2564 632L2528 632M2564 632L2600 632" stroke="#fff" stroke-width="1.300"/>
<text x="2627" y="625" class="w" style="font-size:14px;font-weight:bold" textLength="315" lengthAdjust="spacingAndGlyphs">中国石油电子招标投标交易平台</text>
<text x="2627" y="643" class="w" style="font-size:8.500px" textLength="295" lengthAdjust="spacingAndGlyphs">PetroChina E-Tendering &amp; Bidding Trading Platform</text>
<rect x="2497" y="676" width="1183" height="19" fill="#c9c9c9"/><text x="2501" y="685" class="sm" style="fill:#666" textLength="259" lengthAdjust="spacingAndGlyphs">当前工作: 长城钻探钻具公司2025年度辽河基地钻具摆放场地硬化项目保证金支付</text>
<rect x="2497" y="697" width="1183" height="17" fill="#c9c9c9"/><rect x="2498" y="704" width="3" height="3" fill="#444"/><text x="2507" y="705" class="sm" style="fill:#666" textLength="37" lengthAdjust="spacingAndGlyphs">投标人信息</text>
<text x="2517" y="727" class="sm" textLength="314" lengthAdjust="spacingAndGlyphs">投标人名称: 辽宁金圣建设有限公司   联系人: 辽宁金圣建设有限公司   手 机: 17111473333</text>
<text x="2517" y="749" class="sm" textLength="231" lengthAdjust="spacingAndGlyphs">固定电话: 15304985333   邮 箱: 1114985333@qq.com   传 真:</text>
<rect x="2497" y="763" width="1183" height="17" fill="#c9c9c9"/><rect x="2498" y="770" width="3" height="3" fill="#444"/><text x="2507" y="771" class="sm" style="fill:#666" textLength="42" lengthAdjust="spacingAndGlyphs">标段包信息</text>
<text x="2507" y="789" class="sm" style="fill:#555" textLength="94" lengthAdjust="spacingAndGlyphs">保证金钱包余额: 73007.80元</text>
<rect x="2499" y="799" width="1181" height="23" fill="#ebebeb"/><rect x="2499" y="799" width="23" height="13" fill="#f6f6f6"/>
<path d="M2522.500 799V842M2687.500 799V842M2853.500 799V842M3018.500 799V842M3183.500 799V842M3348.500 799V842M3513.500 799V842" stroke="#e0e0e0"/>
<path d="M2499 822H3680" stroke="#ddd" stroke-width="1.500"/><path d="M2499 842.500H3680" stroke="#d0d0d0" stroke-width="1.500"/>
<text x="2527" y="811" class="sm" style="fill:#666" textLength="41" lengthAdjust="spacingAndGlyphs">标段包编号</text><text x="2692" y="811" class="sm" style="fill:#666" textLength="41" lengthAdjust="spacingAndGlyphs">标段包名称</text><text x="2857" y="811" class="sm" style="fill:#666" textLength="37" lengthAdjust="spacingAndGlyphs">投标保证金</text><text x="3022" y="811" class="sm" style="fill:#666" textLength="15" lengthAdjust="spacingAndGlyphs">单位</text><text x="3188" y="811" class="sm" style="fill:#666" textLength="15" lengthAdjust="spacingAndGlyphs">币种</text><text x="3353" y="811" class="sm" style="fill:#666" textLength="29" lengthAdjust="spacingAndGlyphs">购买日期</text><text x="3518" y="811" class="sm" style="fill:#666" textLength="29" lengthAdjust="spacingAndGlyphs">购买状态</text>
<ellipse cx="2510" cy="833" rx="4" ry="3.500" fill="#fff" stroke="#bbb"/>
<text x="2528" y="833" class="sm">1</text><text x="2692" y="833" class="sm" textLength="72" lengthAdjust="spacingAndGlyphs">钻具摆放场地硬化项目</text><text x="2857" y="833" class="sm" textLength="10" lengthAdjust="spacingAndGlyphs">7.3</text><text x="3022" y="833" class="sm" textLength="15" lengthAdjust="spacingAndGlyphs">万元</text><text x="3188" y="833" class="sm" textLength="22" lengthAdjust="spacingAndGlyphs">人民币</text><text x="3353" y="833" class="sm" textLength="67" lengthAdjust="spacingAndGlyphs">2025-09-05 10:53:29</text><text x="3518" y="833" class="sm" textLength="22" lengthAdjust="spacingAndGlyphs">已付款</text>
<text x="3535" y="853" class="sm" textLength="40" lengthAdjust="spacingAndGlyphs">总计（元）:</text><rect x="3578" y="844" width="60" height="18" rx="2" fill="#eee" stroke="#ddd"/><text x="3584" y="853" class="sm" textLength="26" lengthAdjust="spacingAndGlyphs">73000</text>
<rect x="3054" y="874" width="29" height="16" rx="1" fill="#f2f2f2" stroke="#ddd"/><text x="3068" y="882" class="sm c" style="fill:#555">支付</text><rect x="3093" y="874" width="31" height="16" rx="1" fill="#f2f2f2" stroke="#ddd"/><text x="3108" y="882" class="sm c" style="fill:#555">刷新</text>
<path d="M2496.500 676V890" stroke="#ddd"/>
</g>
<rect x="3481" y="790" width="121" height="76" fill="none" stroke="#cb1a24" stroke-width="4"/>
<!-- status right -->
<rect x="1912" y="1015" width="1917" height="16" fill="#f1f1f1"/><path d="M1912 1015.500H3829" stroke="#c6c6c6" stroke-width="1.500"/>
<text x="1924" y="1026" textLength="111">第 10 页，共 426 页</text><text x="2054" y="1026" textLength="75">6/58656 个字</text>
<path d="M2149 1018H2155V1031M2157 1019L2161 1023M2161 1019L2157 1023" fill="none" stroke="#666"/>
<text x="2180" y="1026" textLength="103">简体中文(中国大陆)</text><text x="2302" y="1026" textLength="56">修订: 关闭</text>
<path d="M2385 1019C2380 1021 2380 1027 2385 1030M2387 1022L2391 1030M2391 1022L2387 1030" fill="none" stroke="#555"/>
<text x="2395" y="1026" textLength="79" style="font-weight:bold">辅助功能: 调查</text>
<path d="M3540 1018H3552V1031H3540ZM3546 1018V1031M3542 1021H3544M3542 1024H3544M3548 1021H3550M3548 1024H3550" fill="none" stroke="#666"/>
<rect x="3567" y="1016" width="38" height="15" fill="#c8c8c8"/><path d="M3581 1018H3592V1031H3581ZM3583 1021H3590M3583 1024H3590M3583 1027H3590" fill="none" stroke="#555"/>
<path d="M3623 1018H3634V1031H3623ZM3625 1021H3632M3625 1024H3629" fill="none" stroke="#666"/>
<path d="M3670 1025H3675M3682 1025H3782M3787 1025H3793M3790 1022V1028" stroke="#444"/><rect x="3745" y="1018" width="3" height="13" fill="#444"/>
<text x="3797" y="1025" textLength="31">130%</text>
</svg>
</body>
</html>
